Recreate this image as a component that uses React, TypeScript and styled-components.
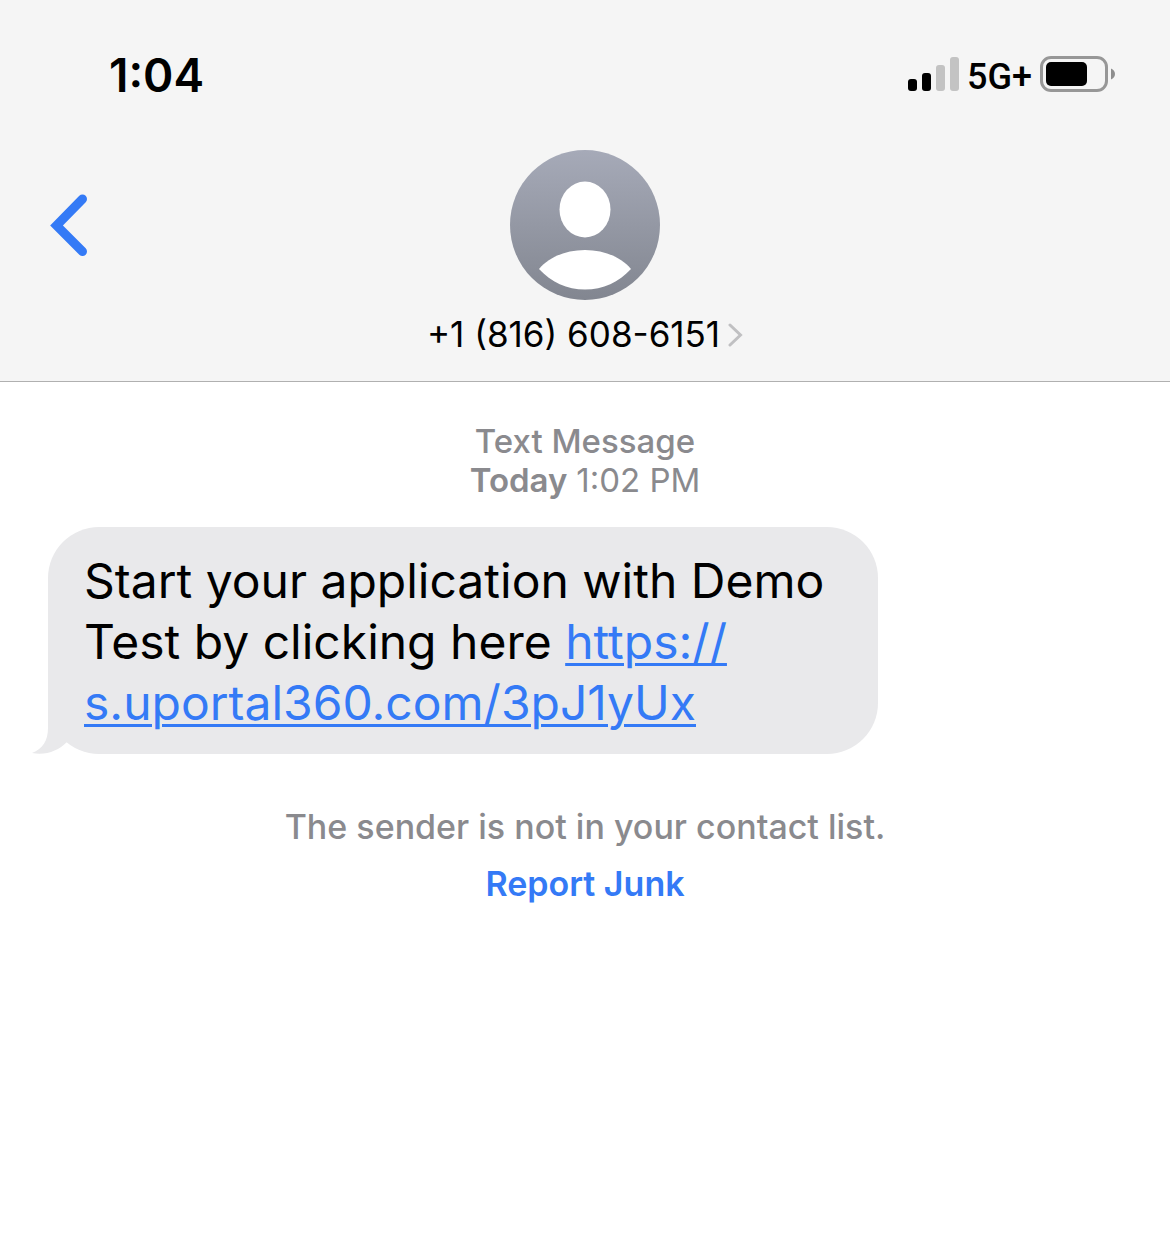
import React from "react";
import styled, { createGlobalStyle } from "styled-components";

const blue = "#347af6";
const sans = `Inter, "Liberation Sans", sans-serif`;

const GlobalStyle = createGlobalStyle`
  *, *::before, *::after { box-sizing: border-box; }
  body { margin: 0; background: #fff; font-family: ${sans}; color: #000; }
`;

const Screen = styled.div`
  min-height: 100vh;
  display: flex;
  flex-direction: column;
  background: #fff;
`;

const Header = styled.header`
  background: #f5f5f5;
  border-bottom: 1px solid #b0b0b0;
  padding-bottom: 27px;
`;

const StatusBar = styled.div`
  display: flex;
  align-items: center;
  justify-content: space-between;
  height: 148px;
  padding: 0 54px 0 109px;
`;

const Clock = styled.time`
  padding-top: 2px;
  font-size: 46px;
  line-height: 56px;
  font-weight: 600;
`;

const StatusIcons = styled.div`
  display: flex;
  align-items: center;
  gap: 8px;
`;

const Network = styled.span`
  font-family: Roboto, ${sans};
  font-size: 36px;
  line-height: 40px;
  font-weight: 500;
  padding-top: 6px;
`;

const NavBar = styled.nav`
  display: grid;
  grid-template-columns: 1fr auto 1fr;
  align-items: start;
  padding: 2px 48px 0;
`;

const BackButton = styled.button`
  justify-self: start;
  display: flex;
  align-items: center;
  height: 150px;
  padding: 0;
  border: 0;
  background: none;
  cursor: pointer;
`;

const ContactButton = styled.button`
  display: flex;
  flex-direction: column;
  align-items: center;
  gap: 15px;
  padding: 0;
  border: 0;
  background: none;
  color: inherit;
  font: inherit;
  cursor: pointer;
`;

const PhoneNumber = styled.span`
  display: flex;
  align-items: center;
  gap: 8px;
  font-size: 35px;
  line-height: 39px;
`;

const Thread = styled.main`
  display: flex;
  flex-direction: column;
  padding: 40px 48px;
`;

const Note = styled.p<{ $top?: number; $size?: number }>`
  margin: ${({ $top = 0 }) => $top}px 0 0;
  color: #8a8a8e;
  font-size: ${({ $size = 33 }) => $size}px;
  line-height: 39px;
  font-weight: 500;
  text-align: center;
`;

const Strong = styled.span`
  font-weight: 600;
`;

const Light = styled.span`
  font-weight: 400;
`;

const Bubble = styled.div`
  position: relative;
  align-self: flex-start;
  max-width: 830px;
  margin-top: 27px;
  padding: 23px 36px 21px;
  border-radius: 51px;
  background: #e9e9eb;
`;

const Tail = styled.svg`
  position: absolute;
  left: -16px;
  bottom: 0;
`;

const MessageText = styled.p`
  position: relative;
  margin: 0;
  font-size: 48px;
  line-height: 61px;
`;

const MessageLink = styled.a`
  color: ${blue};
  text-decoration: underline;
  text-decoration-thickness: 3px;
  text-underline-offset: 4px;
`;

const ReportButton = styled.button`
  align-self: center;
  margin-top: 18px;
  padding: 0;
  border: 0;
  background: none;
  color: ${blue};
  font-family: inherit;
  font-size: 34px;
  line-height: 39px;
  font-weight: 600;
  cursor: pointer;
`;

const Signal = () => (
  <svg width="51" height="34" viewBox="0 0 51 34" aria-hidden="true">
    <rect x="0" y="22" width="9" height="12" rx="3" />
    <rect x="14" y="16" width="9" height="18" rx="3" />
    <rect x="28" y="8" width="9" height="26" rx="3" fill="#c3c3c3" />
    <rect x="42" y="0" width="9" height="34" rx="3" fill="#c3c3c3" />
  </svg>
);

const Battery = () => (
  <svg width="76" height="36" viewBox="0 0 76 36" aria-hidden="true">
    <rect x="1.5" y="1.5" width="65" height="33" rx="9.5" fill="none" stroke="#979797" strokeWidth="3" />
    <rect x="6" y="6" width="41" height="24" rx="5" />
    <path d="M71 12.500C73.500 13.500 75 15.500 75 18S73.500 22.500 71 23.500Z" fill="#8e8e8e" />
  </svg>
);

const Avatar = () => (
  <svg width="150" height="150" viewBox="0 0 150 150" aria-hidden="true">
    <defs>
      <linearGradient id="avatar" x1="0" y1="0" x2="0" y2="1">
        <stop offset="0" stopColor="#a6aab8" />
        <stop offset="1" stopColor="#828690" />
      </linearGradient>
    </defs>
    <circle cx="75" cy="75" r="75" fill="url(#avatar)" />
    <ellipse cx="75" cy="59.500" rx="25.500" ry="28" fill="#fff" />
    <path d="M29 119C39 107 56 100 75 100S111 107 121 119C109 132 93 139.500 75 139.500S41 132 29 119Z" fill="#fff" />
  </svg>
);

export default function App() {
  return (
    <Screen>
      <GlobalStyle />
      <Header>
        <StatusBar>
          <Clock>1:04</Clock>
          <StatusIcons>
            <Signal />
            <Network>5G+</Network>
            <Battery />
          </StatusIcons>
        </StatusBar>
        <NavBar>
          <BackButton aria-label="Back">
            <svg width="42" height="64" viewBox="0 0 42 64" fill="none" aria-hidden="true">
              <path d="M34.500 6L8.500 32.500L34.500 58.500" stroke={blue} strokeWidth="9" strokeLinecap="round" strokeLinejoin="miter" />
            </svg>
          </BackButton>
          <ContactButton>
            <Avatar />
            <PhoneNumber>
              +1 (816) 608-6151
              <svg width="15" height="24" viewBox="0 0 15 24" fill="none" aria-hidden="true">
                <path d="M2 2L12.500 12L2 22" stroke="#c0c0c2" strokeWidth="3" strokeLinecap="round" />
              </svg>
            </PhoneNumber>
          </ContactButton>
        </NavBar>
      </Header>
      <Thread>
        <Note>Text Message</Note>
        <Note>
          <Strong>Today</Strong> <Light>1:02 PM</Light>
        </Note>
        <Bubble>
          <Tail width="60" height="60" viewBox="0 0 60 60" aria-hidden="true">
            <path d="M16 0V34C16 46 11 55 0 59C14 61.500 26 57 35 48L50 30V0Z" fill="#e9e9eb" />
          </Tail>
          <MessageText>
            <span>Start your application with Demo </span>
            <span>Test by clicking here </span>
            <MessageLink href="#">
              https://
              <wbr />
              s.uportal360.com/3pJ1yUx
            </MessageLink>
          </MessageText>
        </Bubble>
        <Note $top={53} $size={34}>The sender is not in your contact list.</Note>
        <ReportButton>Report Junk</ReportButton>
      </Thread>
    </Screen>
  );
}
